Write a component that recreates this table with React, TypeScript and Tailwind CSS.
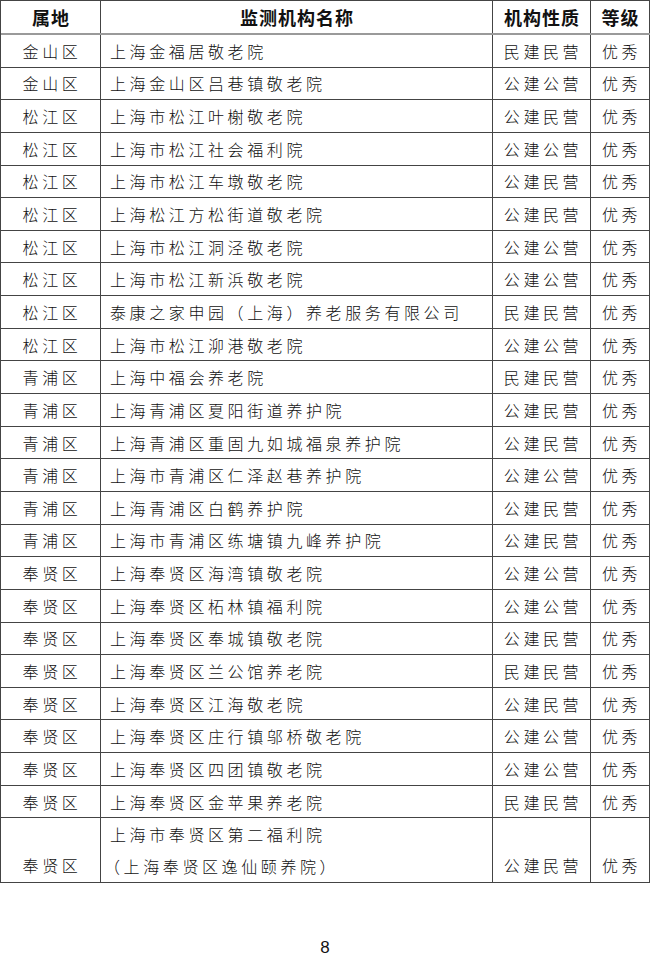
import React from "react";

const rows: [string, string, string, string][] = [
  ["金山区", "上海金福居敬老院", "民建民营", "优秀"],
  ["金山区", "上海金山区吕巷镇敬老院", "公建公营", "优秀"],
  ["松江区", "上海市松江叶榭敬老院", "公建民营", "优秀"],
  ["松江区", "上海市松江社会福利院", "公建公营", "优秀"],
  ["松江区", "上海市松江车墩敬老院", "公建民营", "优秀"],
  ["松江区", "上海松江方松街道敬老院", "公建民营", "优秀"],
  ["松江区", "上海市松江洞泾敬老院", "公建公营", "优秀"],
  ["松江区", "上海市松江新浜敬老院", "公建公营", "优秀"],
  ["松江区", "泰康之家申园（上海）养老服务有限公司", "民建民营", "优秀"],
  ["松江区", "上海市松江泖港敬老院", "公建公营", "优秀"],
  ["青浦区", "上海中福会养老院", "民建民营", "优秀"],
  ["青浦区", "上海青浦区夏阳街道养护院", "公建民营", "优秀"],
  ["青浦区", "上海青浦区重固九如城福泉养护院", "公建民营", "优秀"],
  ["青浦区", "上海市青浦区仁泽赵巷养护院", "公建公营", "优秀"],
  ["青浦区", "上海青浦区白鹤养护院", "公建民营", "优秀"],
  ["青浦区", "上海市青浦区练塘镇九峰养护院", "公建民营", "优秀"],
  ["奉贤区", "上海奉贤区海湾镇敬老院", "公建公营", "优秀"],
  ["奉贤区", "上海奉贤区柘林镇福利院", "公建公营", "优秀"],
  ["奉贤区", "上海奉贤区奉城镇敬老院", "公建民营", "优秀"],
  ["奉贤区", "上海奉贤区兰公馆养老院", "民建民营", "优秀"],
  ["奉贤区", "上海奉贤区江海敬老院", "公建民营", "优秀"],
  ["奉贤区", "上海奉贤区庄行镇邬桥敬老院", "公建公营", "优秀"],
  ["奉贤区", "上海奉贤区四团镇敬老院", "公建公营", "优秀"],
  ["奉贤区", "上海奉贤区金苹果养老院", "民建民营", "优秀"],
];

const font = { fontFamily: '"Noto Sans CJK SC", "Noto Sans", sans-serif' };

export default function App() {
  return (
    <div className="w-[650px] h-[960px] bg-white text-[#111]" style={font}>
      <div className="w-[650px] border-l border-t border-[#444]">
        <div className="flex h-[34px] border-b-2 border-[#9a9a9a] font-bold text-[18px] leading-none tracking-[1px]">
          <div className="w-[100px] flex items-center justify-center border-r border-[#444] pl-[1px]">属地</div>
          <div className="w-[392px] flex items-center justify-center border-r border-[#444] pl-[1px]">监测机构名称</div>
          <div className="w-[98px] flex items-center justify-center border-r border-[#444] pl-[1px]">机构性质</div>
          <div className="w-[59px] flex items-center justify-center border-r border-[#444] pl-[1px]">等级</div>
        </div>
        {rows.map((r, i) => (
          <div key={i} className="flex h-[32.65px] border-b border-[#444] text-[16px] leading-none tracking-[3.6px] font-light">
            <div className="w-[100px] flex items-center justify-center border-r border-[#444] pl-[3px]">{r[0]}</div>
            <div className="w-[392px] flex items-center border-r border-[#444] pl-[9px]">{r[1]}</div>
            <div className="w-[98px] flex items-center justify-center border-r border-[#444] pl-[3px]">{r[2]}</div>
            <div className="w-[59px] flex items-center justify-center border-r border-[#444] pl-[3px]">{r[3]}</div>
          </div>
        ))}
        <div className="flex h-[65px] border-b border-[#444] text-[16px] leading-none tracking-[3.6px] font-light">
          <div className="w-[100px] flex items-end justify-center border-r border-[#444] pl-[3px] pb-[9px]">奉贤区</div>
          <div className="w-[392px] flex flex-col justify-center gap-[16px] border-r border-[#444] pl-[9px]">
            <div>上海市奉贤区第二福利院</div>
            <div className="-ml-[6px]">（上海奉贤区逸仙颐养院）</div>
          </div>
          <div className="w-[98px] flex items-end justify-center border-r border-[#444] pl-[3px] pb-[9px]">公建民营</div>
          <div className="w-[59px] flex items-end justify-center border-r border-[#444] pl-[3px] pb-[9px]">优秀</div>
        </div>
      </div>
      <div className="mt-[56px] text-center text-[17px] leading-none" style={{ fontFamily: '"Liberation Sans", sans-serif' }}>
        8
      </div>
    </div>
  );
}
